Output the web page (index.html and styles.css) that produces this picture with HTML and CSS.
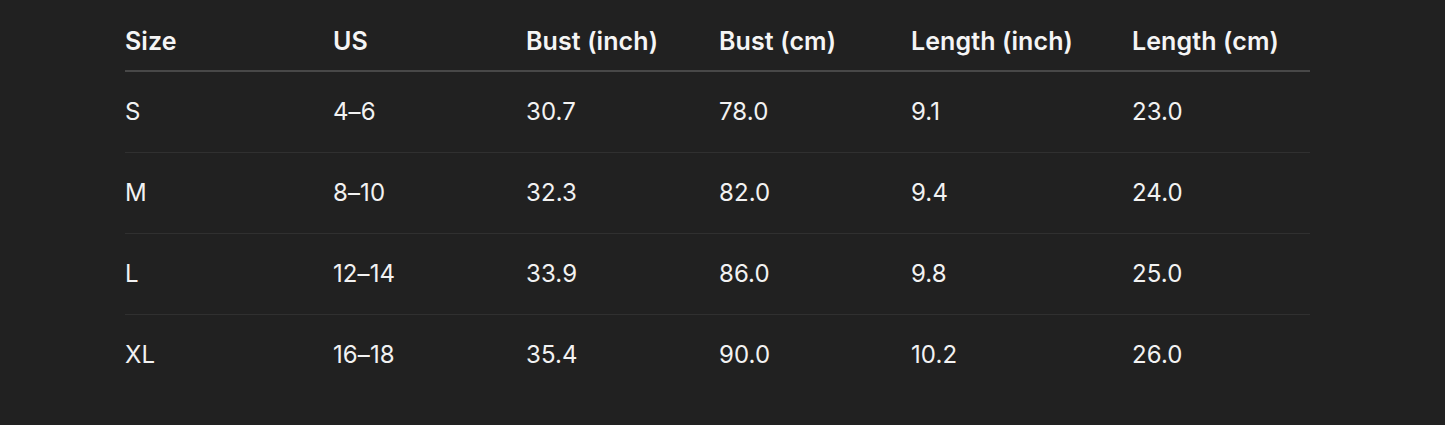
FILE: index.html
```html
<!DOCTYPE html>
<html lang="en">
<head>
<meta charset="utf-8">
<title>Size chart</title>
<link rel="stylesheet" href="styles.css">
</head>
<body>
<main class="page">
  <table class="size-table">
    <colgroup>
      <col class="c1"><col class="c2"><col class="c3"><col class="c4"><col class="c5"><col class="c6">
    </colgroup>
    <thead>
      <tr>
        <th>Size</th><th>US</th><th>Bust (inch)</th><th>Bust (cm)</th><th>Length (inch)</th><th>Length (cm)</th>
      </tr>
    </thead>
    <tbody>
      <tr><td>S</td><td>4–6</td><td>30.7</td><td>78.0</td><td>9.1</td><td>23.0</td></tr>
      <tr><td>M</td><td>8–10</td><td>32.3</td><td>82.0</td><td>9.4</td><td>24.0</td></tr>
      <tr><td>L</td><td>12–14</td><td>33.9</td><td>86.0</td><td>9.8</td><td>25.0</td></tr>
      <tr><td>XL</td><td>16–18</td><td>35.4</td><td>90.0</td><td>10.2</td><td>26.0</td></tr>
    </tbody>
  </table>
</main>
</body>
</html>
```

FILE: styles.css
```css
html, body {
  margin: 0;
  padding: 0;
  background: #212121;
}
body {
  font-family: Inter, "Noto Sans", "Liberation Sans", sans-serif;
  color: #f2f2f2;
  height: 425px;
  overflow: hidden;
}
.page {
  padding: 20px 0 0 125px;
}
.size-table {
  border-collapse: collapse;
  table-layout: fixed;
  width: 1185px;
}
.c1 { width: 208px; }
.c2 { width: 193px; }
.c3 { width: 193px; }
.c4 { width: 192px; }
.c5 { width: 221px; }
.c6 { width: 178px; }
.size-table th,
.size-table td {
  text-align: left;
  padding: 0;
  white-space: nowrap;
}
.size-table th {
  font-size: 25px;
  font-weight: 600;
  letter-spacing: 0.1px;
  height: 50px;
  vertical-align: top;
  line-height: 42px;
  border-bottom: 2px solid #484848;
  color: #f5f5f5;
}
.size-table td {
  font-size: 24px;
  font-weight: 400;
  letter-spacing: 0.1px;
  height: 80px;
  line-height: 80px;
  border-bottom: 1px solid #303030;
}
.size-table tbody tr:last-child td {
  border-bottom: none;
}
```
